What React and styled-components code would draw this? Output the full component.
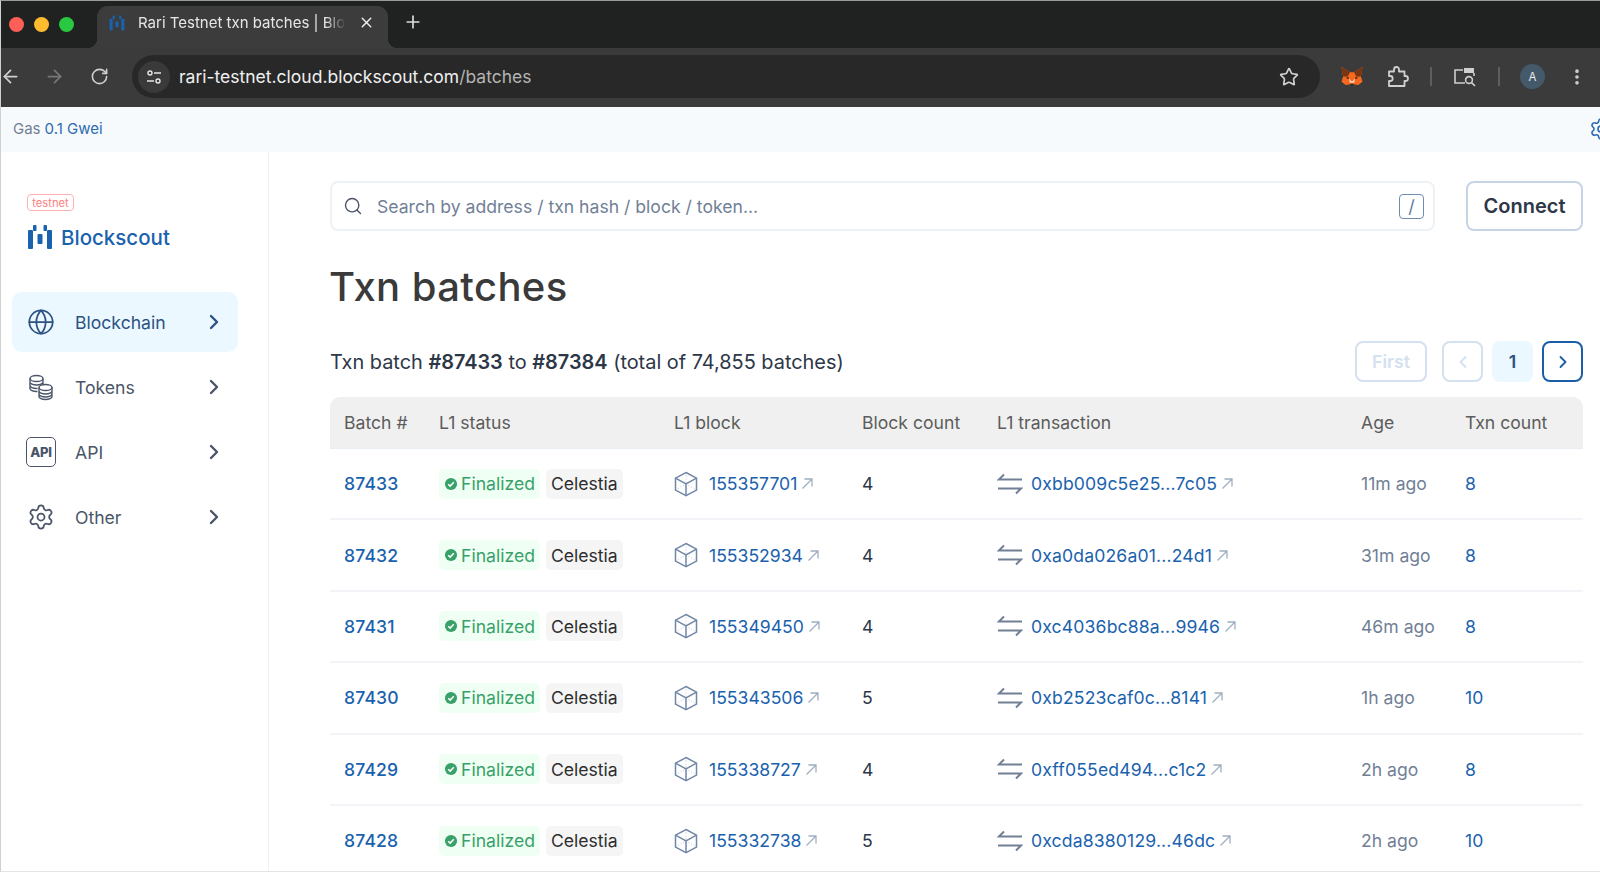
import React from "react";
import styled, { createGlobalStyle } from "styled-components";
import { ArrowLeft, ArrowRight, RotateCw, Star, Plus, X, Search, Globe, Settings, ChevronRight, ChevronLeft, EllipsisVertical } from "lucide-react";

const Global = createGlobalStyle`
  html, body { margin: 0; padding: 0; background: #fff; }
  body { font-family: Inter, "Liberation Sans", sans-serif; }
  * { box-sizing: border-box; }
`;

const Page = styled.div`
  width: 1600px; height: 872px; overflow: hidden; display: flex; flex-direction: column;
  background: #fff; border-left: 1px solid #d0d0d0; border-bottom: 1px solid #e4e4e4; border-top: 1px solid #9a9a9a;
`;
const TabStrip = styled.div`
  height: 47px; flex: none; background: #202221; display: flex; align-items: flex-end; padding-left: 8px;
`;
const Lights = styled.div`
  display: flex; gap: 10px; align-self: center; margin-right: 23px; margin-top: -1px;
`;
const Light = styled.span`
  width: 15px; height: 15px; border-radius: 50%; background: ${p => p.$c};
`;
const Tab = styled.div`
  position: relative; width: 291px; height: 42px; background: #3c3c3c; border-radius: 11px 11px 0 0;
  display: flex; align-items: center; padding: 0 0 9px 12px; color: #e6e6e6; font-size: 15px;
  & > svg { flex: none; }
  &::before, &::after { content: ""; position: absolute; bottom: 0; width: 10px; height: 10px; }
  &::before { left: -10px; background: radial-gradient(circle at 0 0, transparent 10px, #3c3c3c 10.5px); }
  &::after { right: -10px; background: radial-gradient(circle at 100% 0, transparent 10px, #3c3c3c 10.5px); }
`;
const TabTitle = styled.span`
  margin-left: 13px; width: 208px; overflow: hidden; white-space: nowrap; flex: none;
  -webkit-mask-image: linear-gradient(90deg, #000 90%, transparent);
  mask-image: linear-gradient(90deg, #000 90%, transparent);
`;
const TabClose = styled.span`
  display: flex; margin-left: 12px; color: #eee;
`;
const NewTab = styled.span`
  display: flex; color: #ddd; align-self: center; margin: -5px 0 0 15px;
`;
const Toolbar = styled.div`
  height: 59px; flex: none; background: #3b3b3b; display: flex; align-items: center; padding-bottom: 2px;
`;
const NavBtn = styled.span`
  display: flex; width: 24px; margin: 0 ${p => p.$mr}px 0 ${p => p.$ml || 0}px; color: ${p => p.$dim ? "#777" : "#d0d0d0"}; flex: none;
`;
const Address = styled.div`
  width: 1188px; height: 43px; background: #282828; border-radius: 22px; display: flex; align-items: center;
  padding: 0 21px 0 6px; flex: none; margin-left: -3px;
`;
const InfoDot = styled.span`
  width: 32px; height: 32px; border-radius: 50%; background: #3a3a3a; display: flex; align-items: center; justify-content: center; flex: none;
`;
const Url = styled.span`
  margin-left: 9px; font-size: 17.5px; color: #f0f0f0; flex: 1; white-space: nowrap;
  & em { font-style: normal; color: #b4b4b4; }
`;
const ToolIcon = styled.span`
  display: flex; color: #cfcfcf; flex: none; margin-left: ${p => p.$ml}px;
`;
const Divider = styled.span`
  width: 2px; height: 19px; background: #5e5e5e; flex: none; margin-left: ${p => p.$ml}px;
`;
const Avatar = styled.span`
  width: 25px; height: 25px; border-radius: 50%; background: #44596a; color: #e8eef2; font-size: 11.5px;
  display: flex; align-items: center; justify-content: center; flex: none; margin-left: 20px;
`;
const GasBar = styled.div`
  height: 45px; flex: none; background: #f7fafc; display: flex; align-items: center; justify-content: space-between;
  padding: 0 0 2px 12px; font-size: 15px; color: #718096; overflow: hidden;
  & b { font-weight: 400; color: #2b6cb0; margin-left: 4px; }
`;
const GearClip = styled.span`
  display: flex; color: #2b6cb0; margin-right: -13px;
`;
const Body = styled.div`
  flex: 1; min-height: 0; display: flex;
`;
const Sidebar = styled.aside`
  width: 268px; flex: none; border-right: 1px solid #edf2f7; padding: 42px 0 0 11px;
`;
const TestBadge = styled.div`
  width: 47px; height: 17px; margin-left: 15px; border: 1px solid #feb2b2; border-radius: 4px; color: #fc8181; font-size: 11.2px;
  display: flex; align-items: center; justify-content: center;
`;
const Logo = styled.div`
  display: flex; align-items: center; margin: 11px 0 0 15px; gap: 8px; color: #1a62ae; font-size: 20.5px; font-weight: 500; height: 30px;
`;
const Nav = styled.nav`
  margin-top: 40px; display: flex; flex-direction: column; gap: 5px;
`;
const NavItem = styled.a`
  width: 226px; height: 60px; border-radius: 10px; display: flex; align-items: center; padding: 0 14px;
  background: ${p => p.$active ? "#ebf8ff" : "transparent"}; color: ${p => p.$active ? "#2c5282" : "#4a5568"}; font-size: 17.6px;
`;
const NavIcon = styled.span`
  width: 30px; flex: none; display: flex; align-items: center; justify-content: center; margin-right: 19px;
`;
const NavLabel = styled.span`flex: 1;`;
const NavChevron = styled.span`
  display: flex; margin-right: -2px;
`;
const ApiBox = styled.span`
  width: 30px; height: 30px; border: 1.6px solid currentColor; border-radius: 5px; font-size: 13px; font-weight: 800;
  display: flex; align-items: center; justify-content: center; letter-spacing: -0.3px;
`;
const Main = styled.main`
  flex: 1; min-width: 0; padding: 29px 17px 0 61px;
`;
const TopRow = styled.div`
  display: flex; gap: 31px;
`;
const SearchBox = styled.div`
  flex: 1; height: 50px; border: 2px solid #edf2f7; border-radius: 8px; display: flex; align-items: center; padding: 0 9px 0 11px;
  color: #718096; font-size: 17.6px;
`;
const SearchText = styled.span`
  flex: 1; margin-left: 14px;
`;
const Slash = styled.span`
  width: 25px; height: 25px; border: 1px solid #6f8cae; border-radius: 4px; display: flex; align-items: center; justify-content: center;
  font-size: 18px; color: #5e7ea5;
`;
const Connect = styled.button`
  width: 117px; height: 50px; background: #fff; border: 2px solid #c6d5e6; border-radius: 8px; font: 600 20px Inter, sans-serif; color: #2d3748;
`;
const Title = styled.h1`
  margin: 34px 0 0 -1px; font: 500 40px/44px Inter, sans-serif; color: #3a3a3a; letter-spacing: 0.4px;
`;
const SummaryRow = styled.div`
  margin-top: 32px; display: flex; align-items: center; justify-content: space-between; height: 41px;
`;
const Summary = styled.div`
  font-size: 19.9px; color: #2d3748;
  & b { font-weight: 600; }
`;
const Pager = styled.div`
  display: flex; align-items: center;
`;
const PageBtn = styled.span`
  height: 41px; width: ${p => p.$w || 41}px; border-radius: 8px; display: flex; align-items: center; justify-content: center; margin-left: ${p => p.$ml || 0}px;
  font-size: 17.6px; font-weight: 600;
  border: 2px solid ${p => p.$on ? "#1a5fa6" : p.$cur ? "transparent" : "#d3e1f0"};
  background: ${p => p.$cur ? "#ebf8ff" : "#fff"};
  color: ${p => p.$on ? "#1a5fa6" : p.$cur ? "#2c5282" : "#d3e1f0"};
`;
const Table = styled.table`
  margin-top: 15px; width: 100%; table-layout: fixed; border-collapse: separate; border-spacing: 0;
  font-size: 17.6px;
`;
const Th = styled.th`
  height: 52px; padding: 0 0 0 14px; background: #f0f0f0; text-align: left; font-weight: 400; color: #5c5c5c; border-bottom: 1px solid #e8edf3;
  &:first-child { border-top-left-radius: 10px; }
  &:last-child { border-top-right-radius: 10px; }
`;
const Td = styled.td`
  height: 71.4px; padding: 0 0 0 14px; border-bottom: 2px solid #f2f4f7; color: ${p => p.$muted ? "#718096" : "#2d3748"}; white-space: nowrap;
`;
const Lnk = styled.a`
  color: #1a62ae; font-weight: ${p => p.$strong ? 500 : 400}; letter-spacing: ${p => p.$spread ? 0.15 : 0}px;
`;
const Badges = styled.div`
  display: flex; gap: 6px;
`;
const Badge = styled.span`
  height: 30px; padding: 0 5px; border-radius: 5px; display: flex; align-items: center; gap: 3px;
  background: ${p => p.$ok ? "#f0fff4" : "#f5f5f5"}; color: ${p => p.$ok ? "#38a169" : "#2d2d2d"};
`;
const Entity = styled.div`
  display: flex; align-items: center; gap: ${p => p.$gap}px;
`;
const Ext = styled.span`
  display: flex; color: #a0aec0; margin-left: -${p => p.$gap - 4}px;
`;

const LogoMark = ({ s = 26, c = "#1a62ae" }) => (
  <svg width={s} height={s} viewBox="0 0 26 26" fill={c}>
    <rect x="1" y="6" width="5" height="19" rx="1" />
    <rect x="20" y="6" width="5" height="19" rx="1" />
    <rect x="10.5" y="10" width="5" height="10" rx="1" />
    <rect x="6" y="1" width="3.5" height="6" rx="1" />
    <rect x="16.5" y="1" width="3.5" height="6" rx="1" />
  </svg>
);
const SiteInfo = () => (
  <svg width="16" height="16" viewBox="0 0 16 16" fill="none" stroke="#e6e6e6" strokeWidth="1.4">
    <circle cx="4" cy="4" r="2" /><path d="M8 4h7M1 12h7" /><circle cx="12" cy="12" r="2" />
  </svg>
);
const PuzzleIcon = () => (
  <svg width="23" height="23" viewBox="0 0 23 23" fill="none" stroke="currentColor" strokeWidth="1.8" strokeLinejoin="round">
    <path d="M3 6.5h5V4.5a2.5 2.5 0 0 1 5 0v2h5.5V11h1a2.5 2.5 0 0 1 0 5h-1v5H3v-5h1.2a2.5 2.5 0 0 0 0-5H3z" />
  </svg>
);
const Fox = () => (
  <svg width="24" height="21" viewBox="0 0 22 20">
    <path d="M1 1l8 5h4l8-5-1.5 9L21 15l-4 3-3-.5H8l-3 .5-4-3 1.5-5z" fill="#f6681f" />
    <path d="M1 1l8 5-2 4H2.5zM21 1l-8 5 2 4h4.5z" fill="#7a3410" />
    <path d="M8 12l3 3 3-3-1 4H9z" fill="#f9d9c0" />
    <path d="M9 17h4l-1 1.5h-2z" fill="#2a2a2a" />
    <path d="M5 11l3-.5-.5 2zM17 11l-3-.5.5 2z" fill="#33281f" />
  </svg>
);
const MediaSearch = () => (
  <svg width="24" height="20" viewBox="0 0 24 20" fill="none" stroke="#cfcfcf" strokeWidth="1.6">
    <path d="M12 16H2V3h8" /><path d="M11 1h10v5H11z" fill="#cfcfcf" stroke="none" /><path d="M21 6v3" />
    <circle cx="16" cy="13" r="3.4" /><path d="M18.6 15.6L22 19" />
  </svg>
);
const Coins = () => (
  <svg width="28" height="28" viewBox="0 0 28 28" fill="none" stroke="currentColor" strokeWidth="1.4">
    <ellipse cx="9.5" cy="5.5" rx="6.5" ry="3" />
    <path d="M3 5.5v10c0 1.6 2.9 3 6.5 3h1M3 9c0 1.6 2.9 3 6.5 3s6.5-1.4 6.5-3M3 12.5c0 1.6 2.9 3 6.5 3h1M16 5.5V12" />
    <ellipse cx="18.5" cy="14.5" rx="6.5" ry="3" />
    <path d="M12 14.5v9c0 1.6 2.9 3 6.5 3s6.5-1.4 6.5-3v-9M12 18c0 1.6 2.9 3 6.5 3s6.5-1.4 6.5-3M12 21c0 1.6 2.9 3 6.5 3s6.5-1.4 6.5-3" />
  </svg>
);
const CheckBadge = () => (
  <svg width="14" height="14" viewBox="0 0 15 15">
    <circle cx="7.5" cy="7.5" r="6.5" fill="#38a169" />
    <path d="M4.5 7.7l2.1 2.1 3.9-4.2" fill="none" stroke="#fff" strokeWidth="1.7" />
  </svg>
);
const Cube = () => (
  <svg width="24" height="26" viewBox="0 0 24 26" fill="none" stroke="#7187a6" strokeWidth="1.5">
    <path d="M12 1.5l10.5 5.6v12L12 24.6 1.5 19.1v-12z" />
    <path d="M1.5 7.1L12 12.8l10.5-5.7M12 12.8v11.8" />
    <path d="M12 1.5v11M1.5 19l10.5-6 10.5 6" strokeWidth="0.5" strokeDasharray="1 2" />
  </svg>
);
const TxIcon = () => (
  <svg width="26" height="22" viewBox="0 0 26 22" fill="none" stroke="#718096" strokeWidth="2">
    <path d="M25 6.5H2L7 1.5" />
    <path d="M1 15.5h23l-5 5" />
  </svg>
);
const ExtArrow = () => (
  <svg width="13" height="13" viewBox="0 0 13 13" fill="none" stroke="currentColor" strokeWidth="1.3">
    <path d="M1.5 11.5L11 2M3.5 2H11v7.5" />
  </svg>
);

const rows = [
  ["87433", "155357701", "4", "0xbb009c5e25...7c05", "11m ago", "8"],
  ["87432", "155352934", "4", "0xa0da026a01...24d1", "31m ago", "8"],
  ["87431", "155349450", "4", "0xc4036bc88a...9946", "46m ago", "8"],
  ["87430", "155343506", "5", "0xb2523caf0c...8141", "1h ago", "10"],
  ["87429", "155338727", "4", "0xff055ed494...c1c2", "2h ago", "8"],
  ["87428", "155332738", "5", "0xcda8380129...46dc", "2h ago", "10"],
];
const widths = [95, 235, 188, 135, 364, 104, 132];
const heads = ["Batch #", "L1 status", "L1 block", "Block count", "L1 transaction", "Age", "Txn count"];
const navs = [
  ["Blockchain", <Globe size={28} strokeWidth={1.5} />, true],
  ["Tokens", <Coins />],
  ["API", <ApiBox>API</ApiBox>],
  ["Other", <Settings size={28} strokeWidth={1.5} />],
];

export default function App() {
  return (
    <Page>
      <Global />
      <TabStrip>
        <Lights>
          <Light $c="#ff5f57" /><Light $c="#febc2e" /><Light $c="#28c840" />
        </Lights>
        <Tab>
          <LogoMark s={16} />
          <TabTitle>Rari Testnet txn batches | Blockscout</TabTitle>
          <TabClose><X size={17} strokeWidth={2} /></TabClose>
        </Tab>
        <NewTab><Plus size={20} strokeWidth={2} /></NewTab>
      </TabStrip>
      <Toolbar>
        <NavBtn $ml={-1} $mr={20}><ArrowLeft size={21} /></NavBtn>
        <NavBtn $dim $mr={22}><ArrowRight size={21} /></NavBtn>
        <NavBtn $mr={21}><RotateCw size={19} /></NavBtn>
        <Address>
          <InfoDot><SiteInfo /></InfoDot>
          <Url>rari-testnet.cloud.blockscout.com<em>/batches</em></Url>
          <Star size={20} color="#d0d0d0" strokeWidth={2} />
        </Address>
        <ToolIcon $ml={20}><Fox /></ToolIcon>
        <ToolIcon $ml={22}><PuzzleIcon /></ToolIcon>
        <Divider $ml={21} />
        <ToolIcon $ml={21}><MediaSearch /></ToolIcon>
        <Divider $ml={21} />
        <Avatar>A</Avatar>
        <ToolIcon $ml={22}><EllipsisVertical size={20} strokeWidth={2.4} /></ToolIcon>
      </Toolbar>
      <GasBar>
        <span>Gas<b>0.1 Gwei</b></span>
        <GearClip><Settings size={24} strokeWidth={1.6} /></GearClip>
      </GasBar>
      <Body>
        <Sidebar>
          <TestBadge>testnet</TestBadge>
          <Logo><LogoMark />Blockscout</Logo>
          <Nav>
            {navs.map(([label, icon, active]) => (
              <NavItem key={label} $active={active}>
                <NavIcon>{icon}</NavIcon>
                <NavLabel>{label}</NavLabel>
                <NavChevron><ChevronRight size={24} strokeWidth={2.4} /></NavChevron>
              </NavItem>
            ))}
          </Nav>
        </Sidebar>
        <Main>
          <TopRow>
            <SearchBox>
              <Search size={20} strokeWidth={1.7} color="#4a5568" />
              <SearchText>Search by address / txn hash / block / token...</SearchText>
              <Slash>/</Slash>
            </SearchBox>
            <Connect>Connect</Connect>
          </TopRow>
          <Title>Txn batches</Title>
          <SummaryRow>
            <Summary>Txn batch <b>#87433</b> to <b>#87384</b> (total of 74,855 batches)</Summary>
            <Pager>
              <PageBtn $w={72}>First</PageBtn>
              <PageBtn $ml={15}><ChevronLeft size={20} strokeWidth={2.2} /></PageBtn>
              <PageBtn $ml={9} $cur>1</PageBtn>
              <PageBtn $ml={9} $on><ChevronRight size={20} strokeWidth={2.2} /></PageBtn>
            </Pager>
          </SummaryRow>
          <Table>
            <colgroup>{widths.map((w, i) => <col key={i} style={{ width: w }} />)}</colgroup>
            <thead><tr>{heads.map(h => <Th key={h}>{h}</Th>)}</tr></thead>
            <tbody>
              {rows.map(r => (
                <tr key={r[0]}>
                  <Td><Lnk $strong $spread>{r[0]}</Lnk></Td>
                  <Td>
                    <Badges>
                      <Badge $ok><CheckBadge />Finalized</Badge>
                      <Badge>Celestia</Badge>
                    </Badges>
                  </Td>
                  <Td>
                    <Entity $gap={11}><Cube /><Lnk>{r[1]}</Lnk><Ext $gap={11}><ExtArrow /></Ext></Entity>
                  </Td>
                  <Td>{r[2]}</Td>
                  <Td>
                    <Entity $gap={8}><TxIcon /><Lnk $spread>{r[3]}</Lnk><Ext $gap={8}><ExtArrow /></Ext></Entity>
                  </Td>
                  <Td $muted>{r[4]}</Td>
                  <Td><Lnk>{r[5]}</Lnk></Td>
                </tr>
              ))}
            </tbody>
          </Table>
        </Main>
      </Body>
    </Page>
  );
}
